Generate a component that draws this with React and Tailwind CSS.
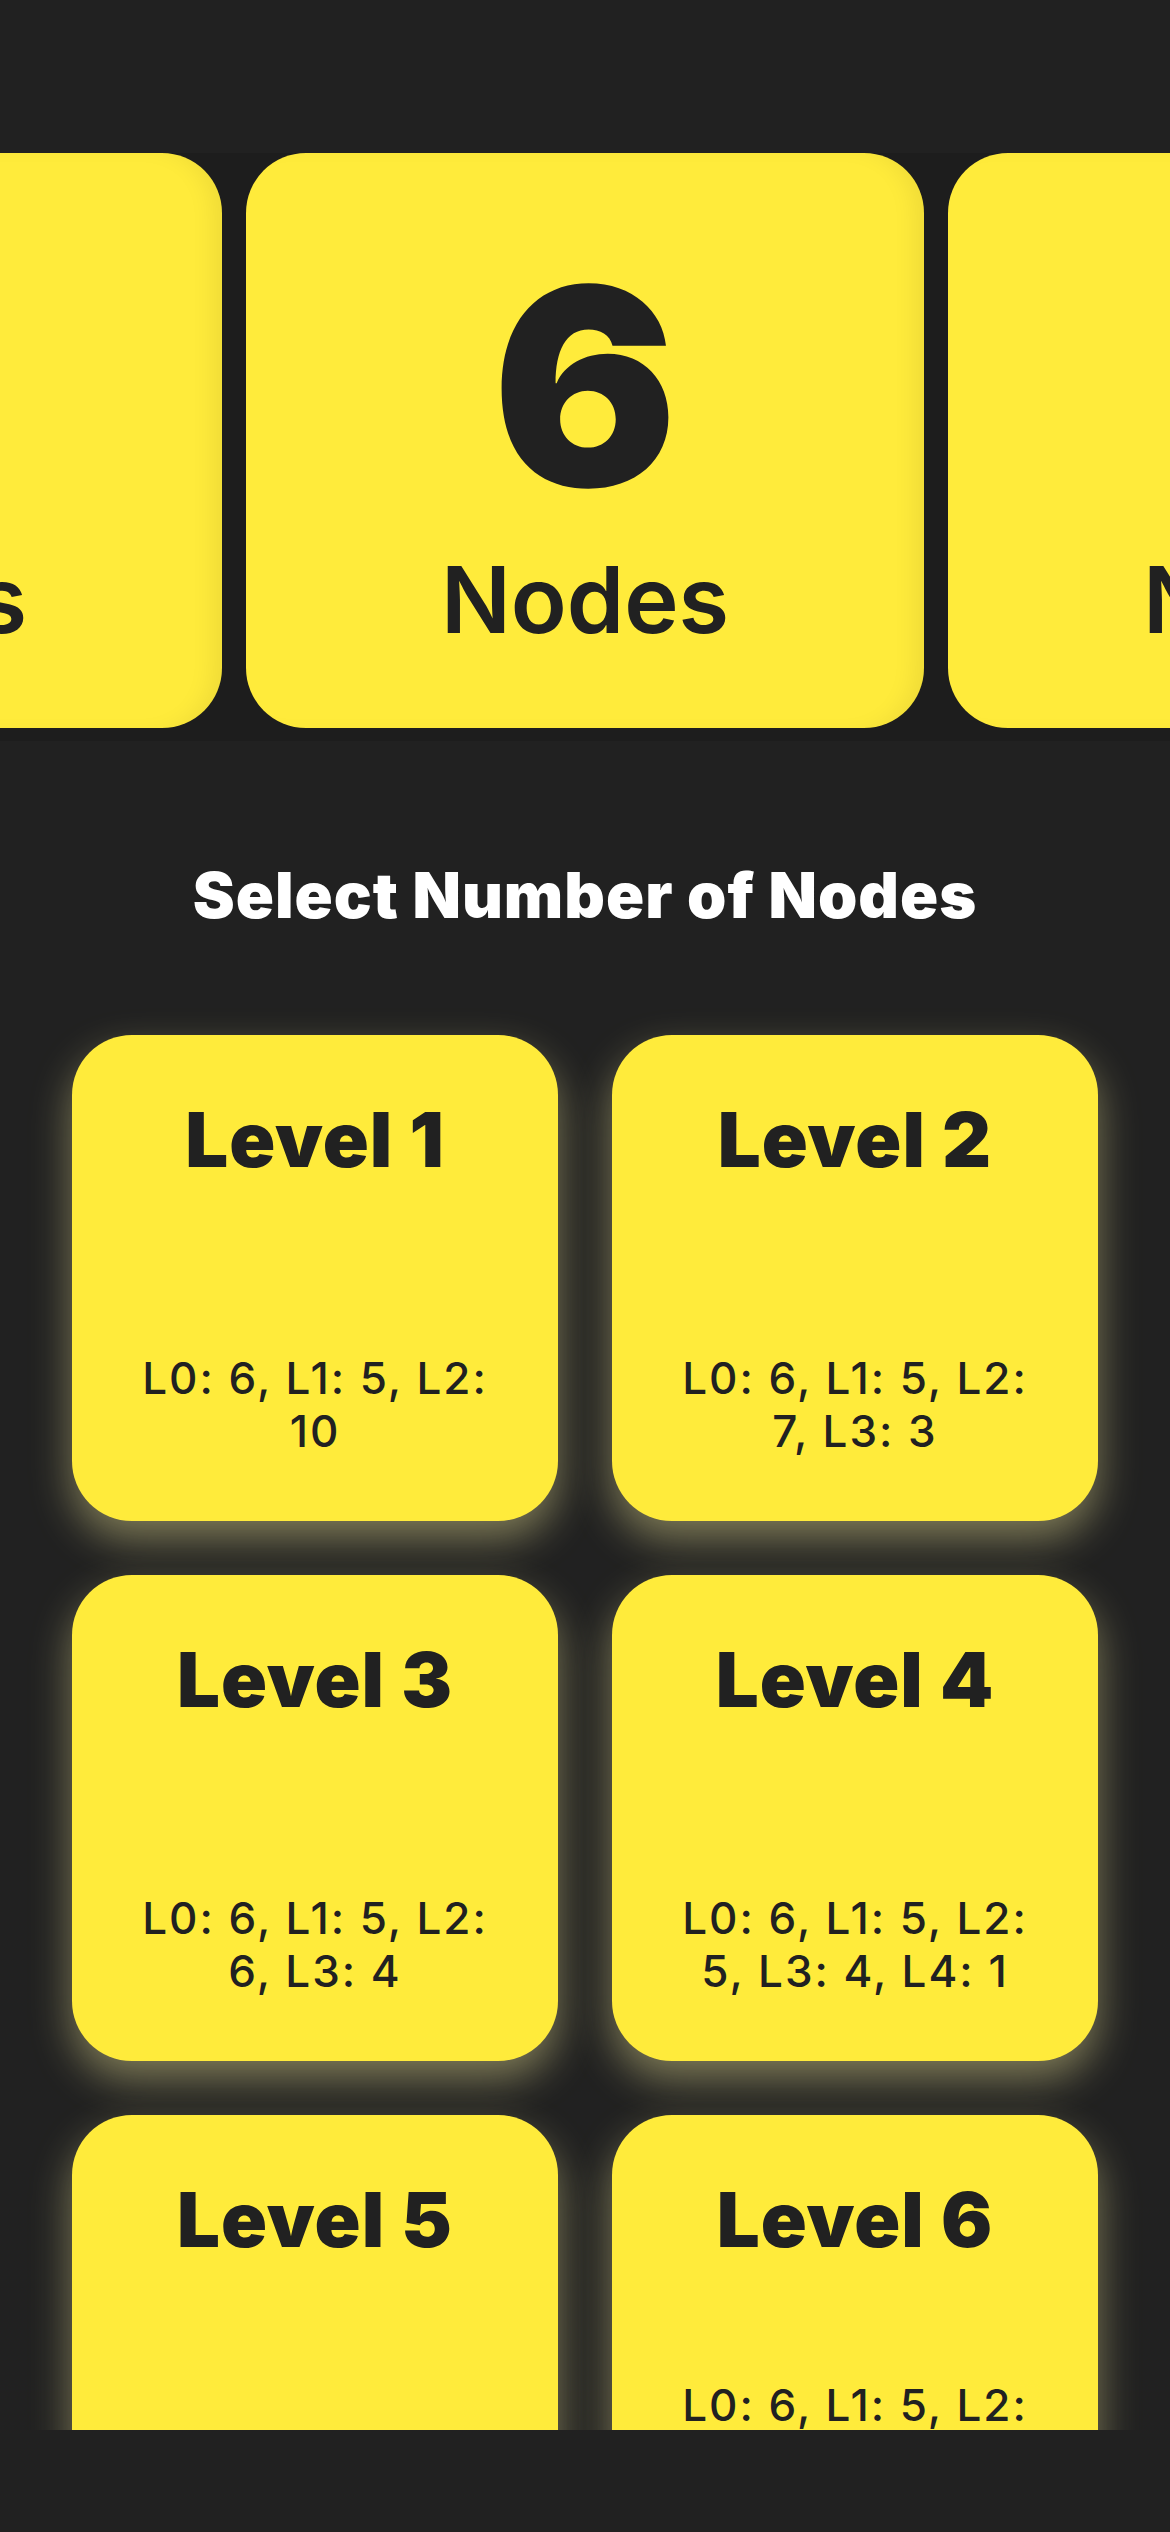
import React from 'react';

const nodeCounts = [5, 6, 7];

const levels = [
  { id: 1, text: 'L0: 6, L1: 5, L2: 10' },
  { id: 2, text: 'L0: 6, L1: 5, L2: 7, L3: 3' },
  { id: 3, text: 'L0: 6, L1: 5, L2: 6, L3: 4' },
  { id: 4, text: 'L0: 6, L1: 5, L2: 5, L3: 4, L4: 1' },
  { id: 5, text: 'L0: 6, L1: 5, L2: 4, L3: 4, L4: 2' },
  { id: 6, text: 'L0: 6, L1: 5, L2: 4, L3: 3, L4: 2, L5: 1' },
];

const NodeCard = ({ count }) => (
  <div className="w-[678px] h-[575px] shrink-0 rounded-[60px] bg-[#FFEB3B] flex flex-col items-center pt-[96px] text-[#212121] shadow-[inset_-18px_0_24px_-10px_rgba(0,0,0,0.07)]">
    <div className="text-[275px] leading-none font-black">{count}</div>
    <div className="mt-[30px] text-[92px] leading-none font-semibold">Nodes</div>
  </div>
);

const LevelCard = ({ level }) => (
  <div className="h-[486px] rounded-[60px] bg-[#FFEB3B] flex flex-col items-center justify-between pt-[66px] pb-[63px] px-[56px] text-[#212121] shadow-[0_18px_40px_rgba(255,245,160,0.42)]">
    <div className="text-[76px] leading-none font-black tracking-[1px]">Level {level.id}</div>
    <div className="text-[44px] leading-[53px] font-medium text-center tracking-[2px]">{level.text}</div>
  </div>
);

export default function App() {
  return (
    <div className="w-[1170px] h-[2532px] bg-[#212121] overflow-hidden flex flex-col font-['Inter','Noto_Sans',sans-serif]">
      <div className="h-[153px] shrink-0" />

      {/* node count carousel */}
      <div className="flex justify-center gap-6 bg-[#1d1d1d] pb-[13px] overflow-hidden shrink-0">
        {nodeCounts.map((n) => (
          <NodeCard key={n} count={n} />
        ))}
      </div>

      <div className="h-[1689px] shrink-0 overflow-hidden">
        <h2 className="mt-[123px] text-center text-white text-[63px] leading-none font-black tracking-[1px]">
          Select Number of Nodes
        </h2>

        <div className="mt-[108px] px-[72px] grid grid-cols-2 gap-[54px]">
          {levels.map((level) => (
            <LevelCard key={level.id} level={level} />
          ))}
        </div>
      </div>
    </div>
  );
}
